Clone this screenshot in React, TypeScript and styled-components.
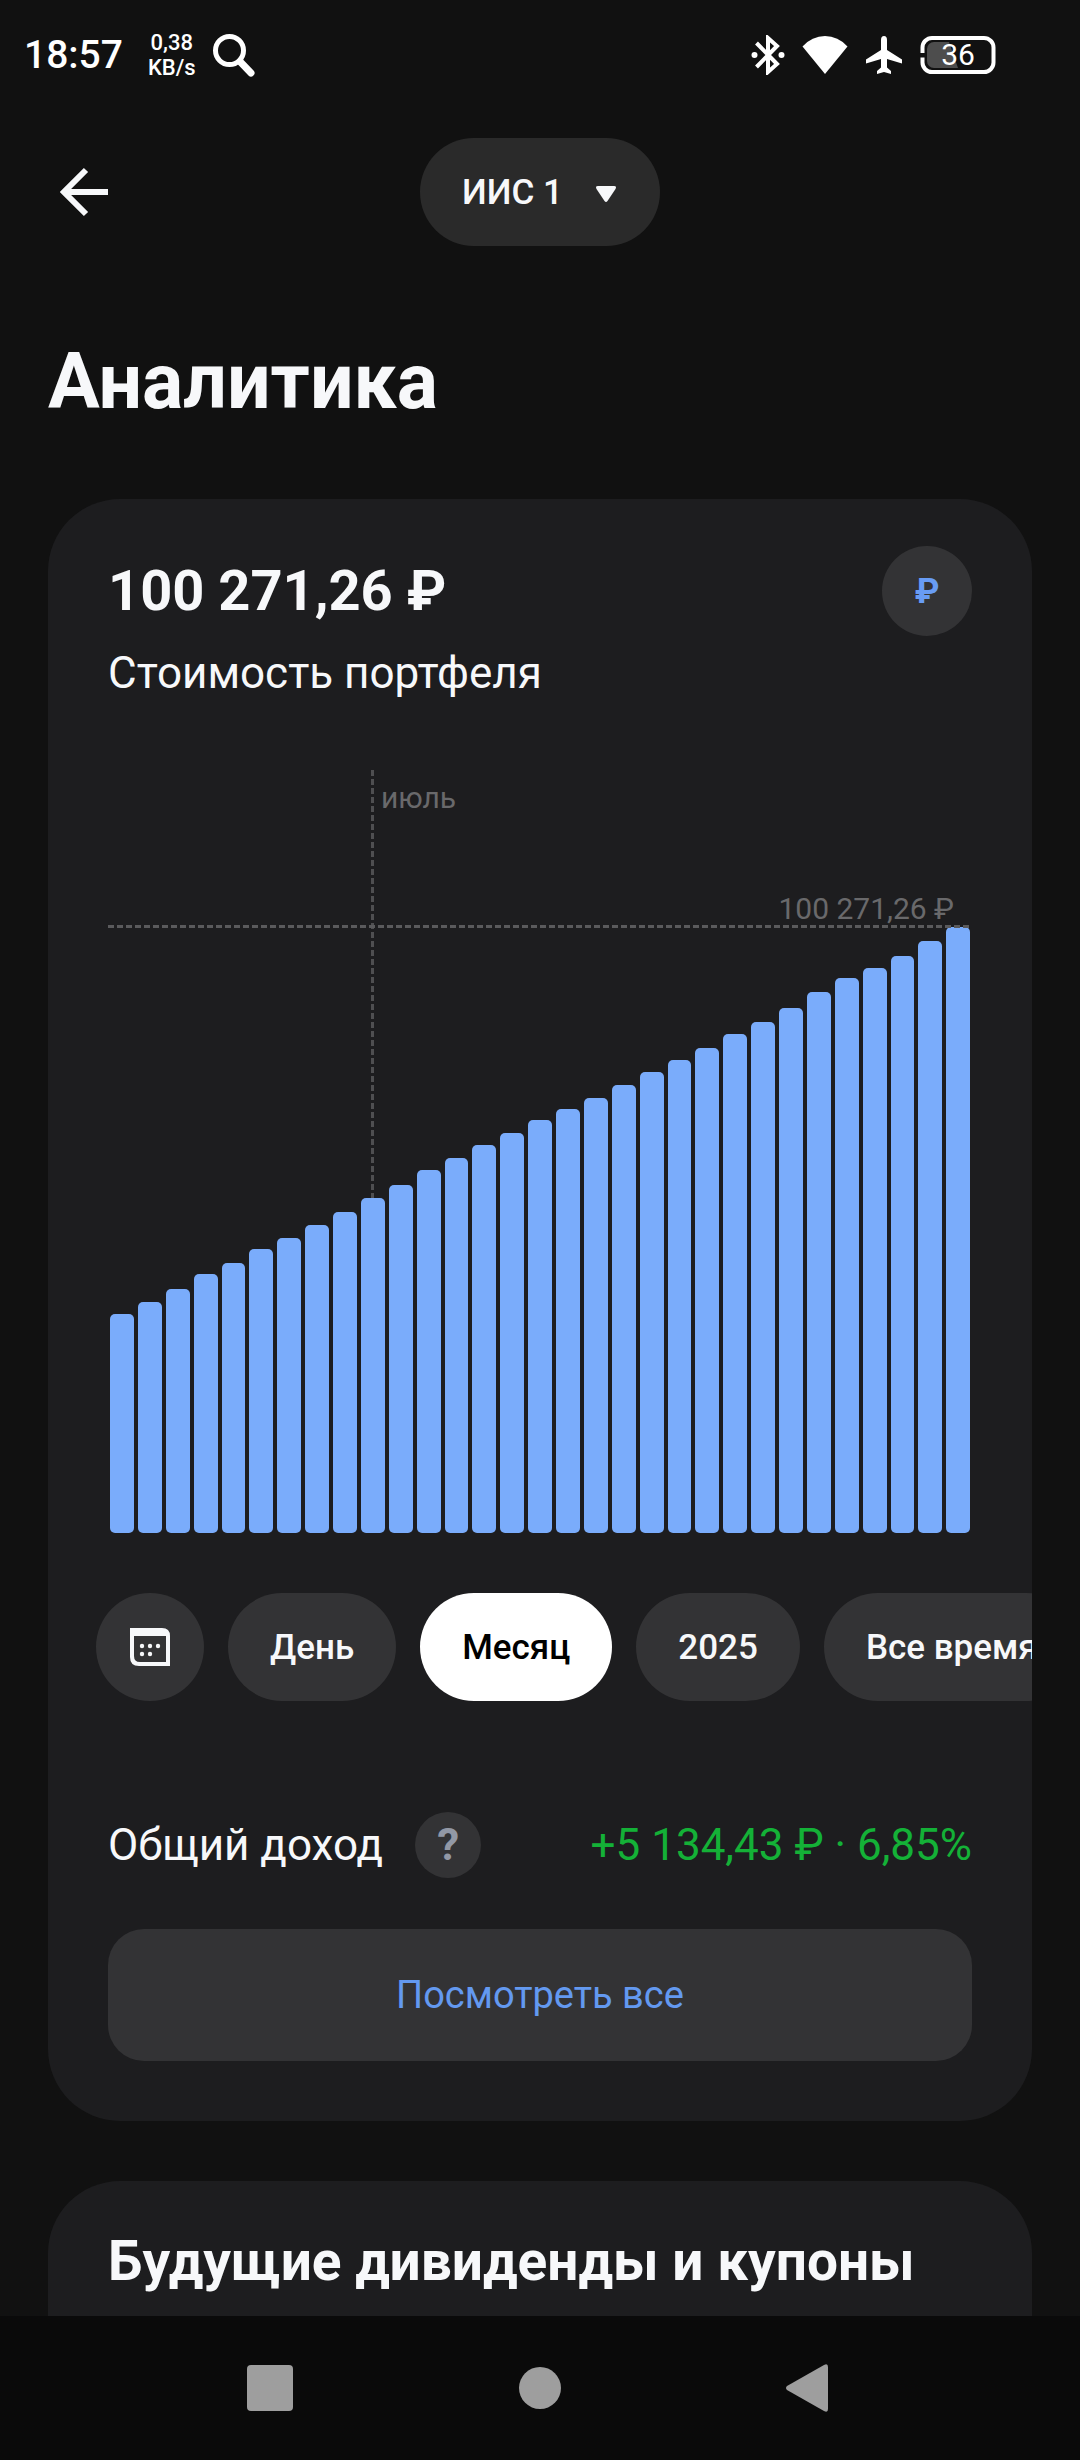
import React, { useState } from "react";
import styled, { createGlobalStyle } from "styled-components";

const GlobalStyle = createGlobalStyle`
  * { box-sizing: border-box; }
  body {
    margin: 0;
    background: #111111;
    color: #f7f8fa;
    font-family: Roboto, "Noto Sans", sans-serif;
  }
  h1, h2, p { margin: 0; }
  button, select {
    margin: 0;
    padding: 0;
    border: 0;
    color: inherit;
    font: inherit;
    cursor: pointer;
  }
  svg { display: block; flex: none; }
`;

const Screen = styled.div`
  display: flex;
  flex-direction: column;
  min-height: 100vh;
`;

const StatusBar = styled.div`
  display: flex;
  align-items: center;
  justify-content: space-between;
  height: 110px;
  padding: 0 84px 0 24px;
  color: #ffffff;
`;

const StatusGroup = styled.div`
  display: flex;
  align-items: center;
  gap: 17px;
`;

const Clock = styled.span`
  font-size: 39px;
  font-weight: 500;
  line-height: 48px;
`;

const NetSpeed = styled.span`
  display: flex;
  flex-direction: column;
  align-items: center;
  margin-left: 8px;
  font-size: 22px;
  font-weight: 500;
  line-height: 25px;
`;

const Battery = styled.div`
  display: grid;
  place-items: center;
  > * { grid-area: 1 / 1; }
`;

const BatteryLevel = styled.span`
  font-size: 30px;
  line-height: 38px;
`;

const Header = styled.header`
  display: grid;
  grid-template-columns: 1fr auto 1fr;
  align-items: center;
  padding: 28px 48px 0;
`;

const BackButton = styled.button`
  display: grid;
  place-items: center;
  width: 72px;
  height: 72px;
  background: none;
`;

const AccountPicker = styled.div`
  display: grid;
  align-items: center;
  border-radius: 54px;
  background: #2a2a2a;
  > * { grid-area: 1 / 1; }
  > svg {
    justify-self: end;
    margin-right: 44px;
    pointer-events: none;
  }
`;

const AccountSelect = styled.select`
  appearance: none;
  width: 240px;
  height: 108px;
  padding: 0 84px 0 42px;
  border-radius: 54px;
  background: transparent;
  font-size: 35px;
  font-weight: 500;
  option { background: #2a2a2a; }
`;

const Main = styled.main`
  display: flex;
  flex: 1;
  flex-direction: column;
  padding: 0 48px;
`;

const PageTitle = styled.h1`
  margin: 88px 0 69px;
  font-size: 77px;
  font-weight: 700;
  line-height: 96px;
`;

const Card = styled.section`
  padding: 47px 60px 60px;
  border-radius: 72px;
  background: #1d1d1f;
  overflow: hidden;
`;

const LowerCard = styled(Card)`
  flex: 1;
  margin-top: 60px;
  padding-bottom: 0;
  border-radius: 72px 72px 0 0;
`;

const CardTitle = styled.h2`
  font-size: 55px;
  font-weight: 700;
  line-height: 66px;
`;

const Summary = styled.div`
  display: flex;
  align-items: center;
  justify-content: space-between;
`;

const Amount = styled.p`
  font-size: 56px;
  font-weight: 700;
  line-height: 90px;
`;

const Caption = styled.p`
  margin-top: 10px;
  font-size: 44px;
  line-height: 54px;
`;

const CurrencyButton = styled.button`
  width: 90px;
  height: 90px;
  border-radius: 50%;
  background: #333335;
  color: #689cf4;
  font-size: 35px;
  font-weight: 700;
`;

const Chart = styled.div`
  position: relative;
  display: flex;
  gap: 4px;
  height: 763px;
  margin-top: 70px;
  padding: 0 2px;
`;

const Column = styled.div`
  position: relative;
  display: flex;
  flex: 1;
  flex-direction: column;
  align-items: center;
  justify-content: flex-end;
`;

const Bar = styled.div`
  width: 100%;
  border-radius: 5px;
  background: #7aacfb;
`;

const MonthGuide = styled.div`
  flex: 1;
  width: 3px;
  background: repeating-linear-gradient(to bottom, #4f4f51 0 6px, transparent 6px 9px);
`;

const ChartLabel = styled.span`
  position: absolute;
  color: #69696b;
  font-size: 30px;
  line-height: 36px;
  white-space: nowrap;
`;

const MonthLabel = styled(ChartLabel)`
  top: 10px;
  left: 20px;
`;

const MaxLabel = styled(ChartLabel)`
  right: 18px;
  bottom: 606px;
`;

const MaxGuide = styled.div`
  position: absolute;
  right: 0;
  bottom: 605px;
  left: 0;
  height: 3px;
  background: repeating-linear-gradient(to right, #5a5a5c 0 6px, transparent 6px 9px);
`;

const Periods = styled.div`
  display: flex;
  gap: 24px;
  margin: 60px -60px 0 -12px;
  overflow-x: auto;
  scrollbar-width: none;
`;

const Chip = styled.button<{ $active?: boolean }>`
  flex: none;
  height: 108px;
  padding: 0 42px;
  border-radius: 54px;
  background: ${(p) => (p.$active ? "#ffffff" : "#333335")};
  color: ${(p) => (p.$active ? "#000000" : "#f7f8fa")};
  font-size: 35px;
  font-weight: 500;
  white-space: nowrap;
`;

const CalendarChip = styled(Chip)`
  display: grid;
  place-items: center;
  width: 108px;
  padding: 0;
`;

const Income = styled.div`
  display: flex;
  align-items: center;
  justify-content: space-between;
  margin-top: 111px;
  font-size: 44px;
  line-height: 54px;
`;

const IncomeLabel = styled.div`
  display: flex;
  align-items: center;
  gap: 32px;
`;

const HelpButton = styled.button`
  width: 66px;
  height: 66px;
  border-radius: 50%;
  background: #333335;
  color: #9298a5;
  font-size: 44px;
  font-weight: 700;
  line-height: 66px;
`;

const IncomeValue = styled.span`
  color: #14b137;
`;

const ShowAllButton = styled.button`
  width: 100%;
  height: 132px;
  margin-top: 51px;
  border-radius: 36px;
  background: #333335;
  color: #6399f0;
  font-size: 38px;
`;

const SystemNav = styled.nav`
  display: grid;
  grid-template-columns: repeat(3, 1fr);
  height: 144px;
  padding: 0 135px;
  background: #0a0a0a;
`;

const NavButton = styled.button`
  display: grid;
  place-items: center;
  background: none;
`;

const SearchIcon = () => (
  <svg width="42" height="44" viewBox="0 0 42 44" fill="none" stroke="#fff" aria-hidden="true">
    <circle cx="16.5" cy="17.5" r="14" strokeWidth="5" />
    <path d="M27 28.5 38 40" strokeWidth="7" strokeLinecap="round" />
  </svg>
);

const BluetoothIcon = () => (
  <svg width="34" height="40" viewBox="0 0 34 40" fill="none" stroke="#fff" aria-hidden="true">
    <path d="M5.5 8 26 29 17 37V3L26 11 5.5 32" strokeWidth="4" />
    <circle cx="3.5" cy="20" r="3" fill="#fff" stroke="none" />
    <circle cx="30.5" cy="20" r="3" fill="#fff" stroke="none" />
  </svg>
);

const WifiIcon = () => (
  <svg width="46" height="40" viewBox="0 0 46 40" fill="#fff" aria-hidden="true">
    <path d="M.5 11.500Q10 1 23 1T45.500 11.500L23 39Z" />
  </svg>
);

const PlaneIcon = () => (
  <svg width="38" height="40" viewBox="0 0 38 40" fill="#fff" aria-hidden="true">
    <path d="M19 1c-2 0-3 1.500-3 4v10L1 24.500v4l15-4.500v8.500l-4 3.500v3l7-2 7 2v-3L22 32.500V24l15 4.500v-4L22 15V5c0-2.500-1-4-3-4Z" />
  </svg>
);

const BatteryIcon = () => (
  <svg width="76" height="40" viewBox="0 0 76 40" fill="none" aria-hidden="true">
    <path d="M7 14a7 7 0 0 1 7-7H29L38 33H14a7 7 0 0 1-7-7Z" fill="#4d4d4d" />
    <path
      d="M2.500 18V12.500a9.500 9.500 0 0 1 9.500-9.500H64a9.500 9.500 0 0 1 9.500 9.500V27.500a9.500 9.500 0 0 1-9.500 9.500H12A9.500 9.500 0 0 1 2.500 27.500V22.500"
      stroke="#fff"
      strokeWidth="4"
    />
  </svg>
);

const BackIcon = () => (
  <svg width="48" height="50" viewBox="0 0 48 50" fill="none" stroke="#f7f8fa" strokeWidth="6" aria-hidden="true">
    <path d="M26 3 4 25 26 47M5 25H48" />
  </svg>
);

const CaretIcon = () => (
  <svg width="20" height="20" viewBox="0 0 20 20" fill="#f7f8fa" aria-hidden="true">
    <path d="M2 4H18Q21 4 19.500 7L11.500 19Q10 21 8.500 19L.5 7Q-1 4 2 4Z" />
  </svg>
);

const CalendarIcon = () => (
  <svg width="40" height="38" viewBox="0 0 40 38" aria-hidden="true">
    <path
      fill="currentColor"
      fillRule="evenodd"
      d="M0 0H32Q40 0 40 8V38H9Q0 38 0 29ZM4 8V28Q4 34 10 34H36V8Z"
    />
    <g fill="currentColor">
      <circle cx="12" cy="18" r="2.200" />
      <circle cx="20" cy="18" r="2.200" />
      <circle cx="28" cy="18" r="2.200" />
      <circle cx="12" cy="26" r="2.200" />
      <circle cx="20" cy="26" r="2.200" />
    </g>
  </svg>
);

const RecentsIcon = () => (
  <svg width="46" height="46" viewBox="0 0 46 46" fill="#9e9e9e" aria-hidden="true">
    <rect width="46" height="46" rx="4" />
  </svg>
);

const HomeIcon = () => (
  <svg width="42" height="42" viewBox="0 0 42 42" fill="#9e9e9e" aria-hidden="true">
    <circle cx="21" cy="21" r="21" />
  </svg>
);

const NavBackIcon = () => (
  <svg width="48" height="48" viewBox="0 0 48 48" fill="#9e9e9e" aria-hidden="true">
    <path d="M1 22 38 1Q42-1 42 3V45Q42 49 38 47L1 26Q-1 24 1 22Z" />
  </svg>
);

const BAR_HEIGHTS = [
  219, 231, 244, 259, 270, 284, 295, 308, 321, 335, 348, 363, 375, 388, 400, 413,
  424, 435, 448, 461, 473, 485, 499, 511, 525, 541, 555, 565, 577, 592, 606,
];
const MONTH_START = 9;

const PERIODS = ["День", "Месяц", "2025", "Все время"];

export default function App() {
  const [period, setPeriod] = useState("Месяц");

  return (
    <Screen>
      <GlobalStyle />
      <StatusBar>
        <StatusGroup>
          <Clock>18:57</Clock>
          <NetSpeed>
            <span>0,38</span>
            <span>KB/s</span>
          </NetSpeed>
          <SearchIcon />
        </StatusGroup>
        <StatusGroup>
          <BluetoothIcon />
          <WifiIcon />
          <PlaneIcon />
          <Battery>
            <BatteryIcon />
            <BatteryLevel>36</BatteryLevel>
          </Battery>
        </StatusGroup>
      </StatusBar>

      <Header>
        <BackButton type="button" aria-label="Назад">
          <BackIcon />
        </BackButton>
        <AccountPicker>
          <AccountSelect aria-label="Счёт" defaultValue="iis1">
            <option value="iis1">ИИС 1</option>
          </AccountSelect>
          <CaretIcon />
        </AccountPicker>
      </Header>

      <Main>
        <PageTitle>Аналитика</PageTitle>

        <Card>
          <Summary>
            <Amount>100 271,26 ₽</Amount>
            <CurrencyButton type="button" aria-label="Валюта: ₽">₽</CurrencyButton>
          </Summary>
          <Caption>Стоимость портфеля</Caption>

          <Chart>
            {BAR_HEIGHTS.map((height, index) => (
              <Column key={index}>
                {index === MONTH_START && (
                  <>
                    <MonthGuide />
                    <MonthLabel>июль</MonthLabel>
                  </>
                )}
                <Bar style={{ height }} />
              </Column>
            ))}
            <MaxGuide />
            <MaxLabel>100 271,26 ₽</MaxLabel>
          </Chart>

          <Periods>
            <CalendarChip type="button" aria-label="Выбрать даты">
              <CalendarIcon />
            </CalendarChip>
            {PERIODS.map((name) => (
              <Chip
                key={name}
                type="button"
                $active={name === period}
                aria-pressed={name === period}
                onClick={() => setPeriod(name)}
              >
                {name}
              </Chip>
            ))}
          </Periods>

          <Income>
            <IncomeLabel>
              <span>Общий доход</span>
              <HelpButton type="button">?</HelpButton>
            </IncomeLabel>
            <IncomeValue>+5 134,43 ₽ · 6,85%</IncomeValue>
          </Income>

          <ShowAllButton type="button">Посмотреть все</ShowAllButton>
        </Card>

        <LowerCard>
          <CardTitle>Будущие дивиденды и купоны</CardTitle>
        </LowerCard>
      </Main>

      <SystemNav>
        <NavButton type="button" aria-label="Недавние"><RecentsIcon /></NavButton>
        <NavButton type="button" aria-label="Домой"><HomeIcon /></NavButton>
        <NavButton type="button" aria-label="Назад"><NavBackIcon /></NavButton>
      </SystemNav>
    </Screen>
  );
}
